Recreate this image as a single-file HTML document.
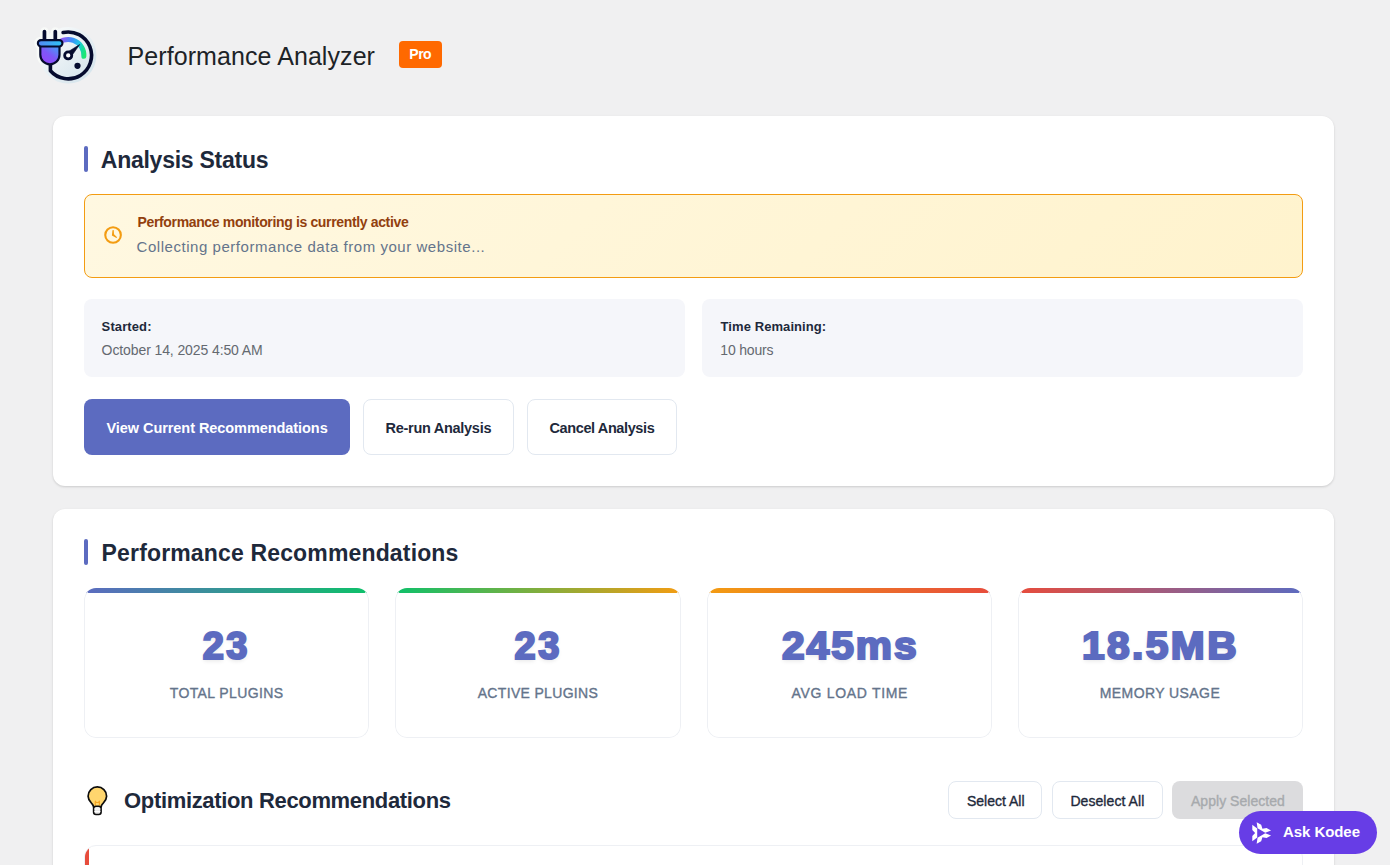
<!DOCTYPE html>
<html lang="en">
<head>
<meta charset="utf-8">
<title>Performance Analyzer</title>
<style>
*{box-sizing:border-box;margin:0;padding:0}
html,body{width:1390px;height:865px;overflow:hidden}
body{background:#f0f0f1;font-family:"Liberation Sans",sans-serif;color:#1e293b;position:relative}
.abs{position:absolute}
.t{position:absolute;white-space:nowrap;line-height:1}
.card{position:absolute;left:53px;width:1281px;background:#fff;border-radius:12px;box-shadow:0 1px 3px rgba(0,0,0,.10),0 1px 2px rgba(0,0,0,.06)}
.bar{position:absolute;left:84px;width:4px;border-radius:2px;background:#5c6bc0}
#banner{left:84px;top:194px;width:1219px;height:84px;border:1px solid #f39c12;border-radius:8px;background:linear-gradient(135deg,#fff8e1 0%,#fff3cd 100%)}
.info{position:absolute;top:299px;width:601px;height:78px;background:#f5f6fa;border-radius:8px}
.btn{position:absolute;border-radius:8px}
.btn.o{background:#fff;border:1px solid #e2e8f0}
.stat{position:absolute;top:588px;width:285px;height:150px;background:#fff;border-radius:12px;overflow:hidden}
.stat:after{content:"";position:absolute;inset:0;border:1px solid #eef0f4;border-top-color:transparent;border-radius:12px}
.stat i{position:absolute;left:0;right:0;top:0;height:5px}
#kodee{left:1239px;top:811px;width:138px;height:43px;border-radius:22px;background:#673de6}
.n{-webkit-text-stroke:2.2px #5c6bc0;text-shadow:0 2px 4px rgba(0,0,0,.10)}
.c{-webkit-text-stroke:.35px #64748b}
.m{-webkit-text-stroke:.35px currentColor}

#title{left:127.60px;top:43.84px;font-size:25px;font-weight:400;color:#1d2327;letter-spacing:0.073px;}
#pro{left:409.30px;top:47.15px;font-size:14px;font-weight:700;color:#ffffff;letter-spacing:-0.500px;}
#h_as{left:100.80px;top:148.53px;font-size:23px;font-weight:700;color:#1e293b;letter-spacing:-0.255px;}
#b1{left:137.50px;top:215.15px;font-size:14px;font-weight:700;color:#92400e;letter-spacing:-0.350px;}
#b2{left:136.50px;top:239.30px;font-size:15px;font-weight:400;color:#64748b;letter-spacing:0.545px;}
#s_l{left:101.60px;top:320.00px;font-size:13px;font-weight:700;color:#1e293b;letter-spacing:0.111px;}
#s_v{left:101.60px;top:343.15px;font-size:14px;font-weight:400;color:#646970;letter-spacing:-0.101px;}
#t_l{left:720.60px;top:320.00px;font-size:13px;font-weight:700;color:#1e293b;letter-spacing:0.073px;}
#t_v{left:720.30px;top:343.15px;font-size:14px;font-weight:400;color:#646970;letter-spacing:-0.170px;}
#btn1{left:106.50px;top:421.30px;font-size:14.5px;font-weight:700;color:#ffffff;letter-spacing:-0.063px;}
#btn2{left:385.60px;top:421.30px;font-size:14.5px;font-weight:700;color:#1e293b;letter-spacing:-0.286px;}
#btn3{left:549.50px;top:421.30px;font-size:14.5px;font-weight:700;color:#1e293b;letter-spacing:-0.390px;}
#h_pr{left:101.60px;top:541.53px;font-size:23px;font-weight:700;color:#1e293b;letter-spacing:0.154px;}
#n1{left:202.80px;top:627.14px;font-size:38px;font-weight:700;color:#5c6bc0;letter-spacing:2.440px;}
#n2{left:514.50px;top:627.14px;font-size:38px;font-weight:700;color:#5c6bc0;letter-spacing:2.720px;}
#n3{left:782.10px;top:627.14px;font-size:38px;font-weight:700;color:#5c6bc0;letter-spacing:1.880px;transform:scaleX(1.07);transform-origin:0 50%;}
#n4{left:1082.20px;top:627.14px;font-size:38px;font-weight:700;color:#5c6bc0;letter-spacing:2.272px;transform:scaleX(1.07);transform-origin:0 50%;}
#c1{left:169.70px;top:686.15px;font-size:14px;font-weight:400;color:#64748b;letter-spacing:0.397px;}
#c2{left:477.70px;top:686.15px;font-size:14px;font-weight:400;color:#64748b;letter-spacing:0.325px;}
#c3{left:791.60px;top:686.15px;font-size:14px;font-weight:400;color:#64748b;letter-spacing:0.686px;}
#c4{left:1099.80px;top:686.15px;font-size:14px;font-weight:400;color:#64748b;letter-spacing:0.412px;}
#opt{left:124.10px;top:790.38px;font-size:22px;font-weight:700;color:#1e293b;letter-spacing:-0.342px;}
#sa{left:967.00px;top:794.15px;font-size:14px;font-weight:400;color:#1e293b;}
#da{left:1070.40px;top:794.15px;font-size:14px;font-weight:400;color:#1e293b;letter-spacing:0.068px;}
#ap{left:1191.00px;top:794.15px;font-size:14px;font-weight:400;color:#a7aaad;letter-spacing:0.034px;}
#kd{left:1283.00px;top:824.30px;font-size:15px;font-weight:700;color:#ffffff;letter-spacing:-0.067px;}
</style>
</head>
<body>
<!-- header -->
<svg id="logo" class="abs" style="left:20px;top:15px" width="100" height="80" viewBox="20 15 100 80">
  <defs>
    <linearGradient id="gHalo" x1="0" y1="0" x2="1" y2="1"><stop offset="0.1" stop-color="#f9fbfb"/><stop offset="1" stop-color="#d0e1ea"/></linearGradient>
    <linearGradient id="gArc" gradientUnits="userSpaceOnUse" x1="58" y1="42" x2="86" y2="52"><stop offset="0" stop-color="#8b5cf6"/><stop offset=".12" stop-color="#8b5cf6"/><stop offset=".42" stop-color="#3b8df8"/><stop offset=".68" stop-color="#22c7e6"/><stop offset=".86" stop-color="#14dc9a"/><stop offset="1" stop-color="#1fe870"/></linearGradient>
    <linearGradient id="gBar" x1="0" y1="0" x2="1" y2="0"><stop offset="0" stop-color="#5588f6"/><stop offset="1" stop-color="#2cc4f3"/></linearGradient>
    <linearGradient id="gBody" gradientUnits="userSpaceOnUse" x1="57" y1="46" x2="46" y2="61"><stop offset="0" stop-color="#4a92f7"/><stop offset=".2" stop-color="#5688f6"/><stop offset=".6" stop-color="#7d58f7"/><stop offset="1" stop-color="#8c4bf8"/></linearGradient>
  </defs>
  <!-- halo -->
  <g fill="#f8faf8" stroke="#f8faf8" stroke-linecap="round" stroke-linejoin="round">
    <path d="M44.45 31.6V40M55.3 31.6V40" stroke-width="8.6" fill="none"/>
    <rect x="37.9" y="40.3" width="24.5" height="5.8" rx="2.9" stroke-width="7.2"/>
    <path d="M40.3 46V54.5A9.6 9.6 0 0 0 59.5 54.5V46Z" stroke-width="7.2"/>
  </g>
  <circle cx="68.1" cy="55.3" r="28.3" fill="url(#gHalo)"/>
  <!-- ring + cord -->
  <path d="M63.1 32.5A23.45 23.45 0 1 1 50.4 70.8V63" fill="none" stroke="#050b2e" stroke-width="3.6" stroke-linecap="round" stroke-linejoin="round"/>
  <!-- gauge arc -->
  <path d="M55.2 46.1A15.8 15.8 0 0 1 83.86 56.3" fill="none" stroke="url(#gArc)" stroke-width="5" stroke-linecap="round"/>
  <!-- needle -->
  <path d="M79.7 44.5L71.6 56.0L67.7 52.0Z" fill="#050b2e" stroke="#050b2e" stroke-width=".6" stroke-linejoin="round"/>
  <circle cx="68.2" cy="55.4" r="3.55" fill="#fff" stroke="#050b2e" stroke-width="2.8"/>
  <circle cx="77.5" cy="65.8" r="3.1" fill="#050b2e"/>
  <!-- plug -->
  <path d="M44.45 31.6V40M55.3 31.6V40" stroke="#050b2e" stroke-width="3.7" stroke-linecap="round" fill="none"/>
  <path d="M40.3 46V54.8A9.6 9.6 0 0 0 59.5 54.8V46Z" fill="url(#gBody)" stroke="#050b2e" stroke-width="2.2" stroke-linejoin="round"/>
  <rect x="37.85" y="40.15" width="24.6" height="6.3" rx="3.15" fill="url(#gBar)" stroke="#050b2e" stroke-width="2.1"/>
</svg>
<h1 id="title" class="t">Performance Analyzer</h1>
<div class="abs" style="left:399px;top:41px;width:43px;height:27px;background:#ff6900;border-radius:4px"></div>
<span id="pro" class="t">Pro</span>

<!-- card 1: Analysis Status -->
<div class="card" style="top:116px;height:370px"></div>
<div class="bar" style="top:146px;height:26px"></div>
<h2 id="h_as" class="t">Analysis Status</h2>
<div id="banner" class="abs"></div>
<svg class="abs" style="left:102px;top:224px" width="22" height="22" viewBox="102 224 22 22"><circle cx="113.05" cy="235" r="7.8" fill="none" stroke="#f39c12" stroke-width="2.1"/><path d="M112.45 230.3L113.75 230.1L114 234.2L117.1 237.3L116.4 238L111.9 235.6Z" fill="#f39c12"/></svg>
<strong id="b1" class="t">Performance monitoring is currently active</strong>
<p id="b2" class="t">Collecting performance data from your website...</p>
<div class="info" style="left:84px"></div>
<div class="info" style="left:702px"></div>
<div id="s_l" class="t">Started:</div><div id="s_v" class="t">October 14, 2025 4:50 AM</div><div id="t_l" class="t">Time Remaining:</div><div id="t_v" class="t">10 hours</div>
<div class="btn" style="left:84px;top:399px;width:266px;height:56px;background:#5c6bc0"></div>
<div class="btn o" style="left:363px;top:399px;width:151px;height:56px"></div>
<div class="btn o" style="left:527px;top:399px;width:150px;height:56px"></div>
<span id="btn1" class="t">View Current Recommendations</span><span id="btn2" class="t">Re-run Analysis</span><span id="btn3" class="t">Cancel Analysis</span>

<!-- card 2: Performance Recommendations -->
<div class="card" style="top:509px;height:400px"></div>
<div class="bar" style="top:539px;height:26px"></div>
<h2 id="h_pr" class="t">Performance Recommendations</h2>
<div class="stat" style="left:84px"><i style="background:linear-gradient(90deg,#5c6bc0,#0ec06a)"></i></div>
<div class="stat" style="left:395px;width:286px"><i style="background:linear-gradient(90deg,#0ec06a,#f39c12)"></i></div>
<div class="stat" style="left:707px"><i style="background:linear-gradient(90deg,#f39c12,#e74c3c)"></i></div>
<div class="stat" style="left:1018px"><i style="background:linear-gradient(90deg,#e74c3c,#5c6bc0)"></i></div>
<div id="n1" class="t n">23</div><div id="c1" class="t c">TOTAL PLUGINS</div><div id="n2" class="t n">23</div><div id="c2" class="t c">ACTIVE PLUGINS</div><div id="n3" class="t n">245ms</div><div id="c3" class="t c">AVG LOAD TIME</div><div id="n4" class="t n">18.5MB</div><div id="c4" class="t c">MEMORY USAGE</div>

<!-- optimization row -->
<svg class="abs" style="left:83px;top:782px" width="30" height="36" viewBox="83 782 30 36">
    <path d="M97.35 786.9a9.25 9.25 0 0 1 9.25 9.25c0 3.9-2.5 5.9-4.3 8.2-.8 1-1.1 1.6-1.1 2.6h-7.7c0-1-.3-1.6-1.1-2.6-1.8-2.3-4.3-4.3-4.3-8.200a9.250 9.250 0 0 1 9.250-9.250z" fill="#ffd66e" stroke="#0d0d0d" stroke-width="1.7" stroke-linejoin="round"/>
    <path d="M95.3 805.5v-4.300l1 1.300h2.100l1-1.300v4.300" fill="none" stroke="#f6a623" stroke-width="1.200" stroke-linejoin="round"/>
    <rect x="93.6" y="806.200" width="7.500" height="8.300" rx="2.400" fill="#e9e9e9" stroke="#0d0d0d" stroke-width="1.600"/>
    <path d="M94.4 809h5.900M94.400 811.500h5.900" stroke="#fff" stroke-width="1"/>
  </svg>
<h3 id="opt" class="t">Optimization Recommendations</h3>
<div class="btn o" style="left:948px;top:781px;width:94px;height:38px"></div>
<div class="btn o" style="left:1052px;top:781px;width:111px;height:38px"></div>
<div class="btn" style="left:1172px;top:781px;width:131px;height:38px;background:#dcdcde"></div>
<span id="sa" class="t m">Select All</span><span id="da" class="t m">Deselect All</span><span id="ap" class="t m">Apply Selected</span>
<div class="abs" style="left:84px;top:845px;width:1219px;height:80px;background:#fff;border:1px solid #eef0f4;border-radius:12px;overflow:hidden"><div class="abs" style="left:0;top:0;width:4px;height:80px;background:#e74c3c"></div></div>

<!-- Ask Kodee -->
<div id="kodee" class="abs"><svg class="abs" style="left:9px;top:9.9px" width="24" height="24" viewBox="-12 -12 24 24"><g fill="#fff"><path id="kb" d="M-7.7 -8.3L-2.8 -4.45V4.45L-7.7 8.3V3.1L-4.9 0L-7.7 -3.1Z"/><path d="M-7.7 -8.3L-2.8 -4.45V4.45L-7.7 8.3V3.1L-4.9 0L-7.7 -3.1Z" transform="rotate(120)"/><path d="M-7.7 -8.3L-2.8 -4.45V4.45L-7.7 8.3V3.1L-4.9 0L-7.7 -3.1Z" transform="rotate(240)"/></g></svg></div>
<span id="kd" class="t">Ask Kodee</span>
</body>
</html>
